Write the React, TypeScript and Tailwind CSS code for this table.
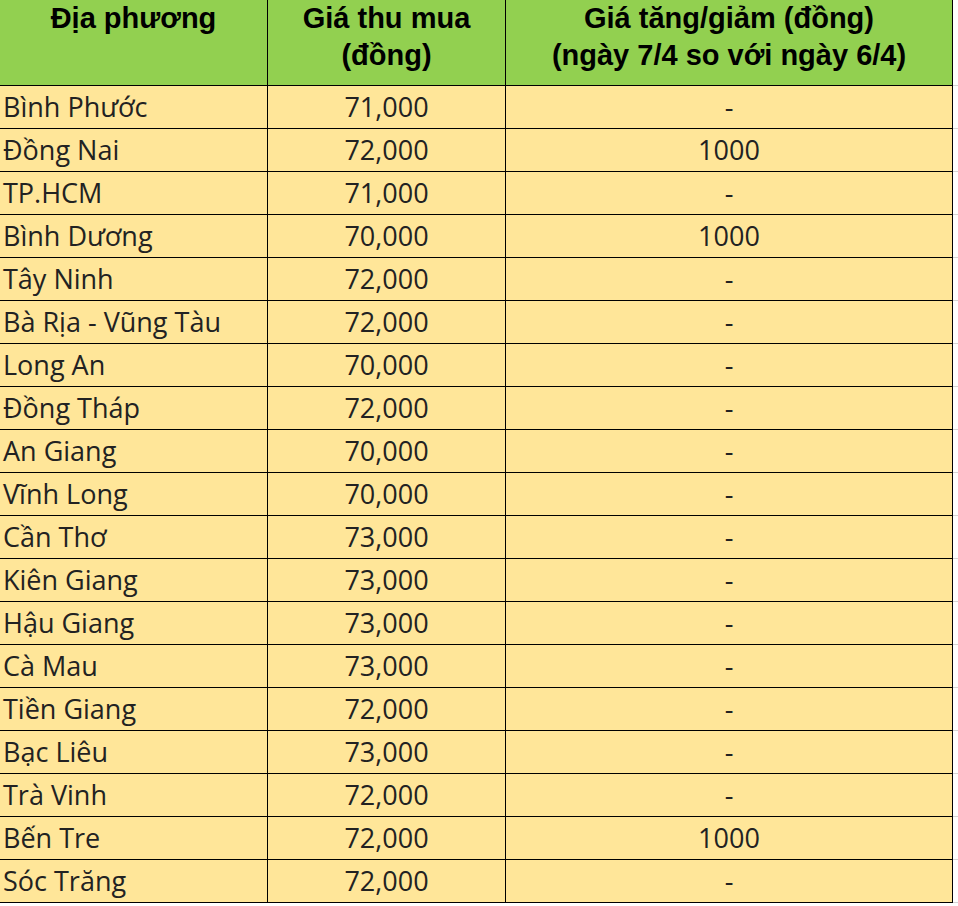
const rows: [string, string, string][] = [
  ["Bình Phước", "71,000", "-"],
  ["Đồng Nai", "72,000", "1000"],
  ["TP.HCM", "71,000", "-"],
  ["Bình Dương", "70,000", "1000"],
  ["Tây Ninh", "72,000", "-"],
  ["Bà Rịa - Vũng Tàu", "72,000", "-"],
  ["Long An", "70,000", "-"],
  ["Đồng Tháp", "72,000", "-"],
  ["An Giang", "70,000", "-"],
  ["Vĩnh Long", "70,000", "-"],
  ["Cần Thơ", "73,000", "-"],
  ["Kiên Giang", "73,000", "-"],
  ["Hậu Giang", "73,000", "-"],
  ["Cà Mau", "73,000", "-"],
  ["Tiền Giang", "72,000", "-"],
  ["Bạc Liêu", "73,000", "-"],
  ["Trà Vinh", "72,000", "-"],
  ["Bến Tre", "72,000", "1000"],
  ["Sóc Trăng", "72,000", "-"],
];

export default function App() {
  return (
    <div className="flex bg-white w-[958px] h-[906px]">
      {/* price table */}
      <div className="w-[953px] flex flex-col">
        <div className="flex h-[86px] bg-[#92d050] border-b border-black font-['Liberation_Sans',Arial,sans-serif] font-bold text-[29px] leading-[37px] text-black text-center">
          <div className="w-[268px] border-r border-black">Địa phương</div>
          <div className="w-[238px] border-r border-black">
            Giá thu mua
            <br />
            (đồng)
          </div>
          <div className="w-[447px] border-r border-black">
            Giá tăng/giảm (đồng)
            <br />
            (ngày 7/4 so với ngày 6/4)
          </div>
        </div>
        {rows.map(([place, price, diff]) => (
          <div
            key={place}
            className="flex h-[43px] bg-[#ffe699] border-b border-black font-['Open_Sans',sans-serif] text-[27px] text-[#222]"
          >
            <div className="w-[268px] border-r border-black flex items-center pl-[3px]">{place}</div>
            <div className="w-[238px] border-r border-black flex items-center justify-center">{price}</div>
            <div className="w-[447px] border-r border-black flex items-center justify-center">{diff}</div>
          </div>
        ))}
      </div>
      {/* sheet grid beyond the table */}
      <div className="flex-1 flex flex-col">
        <div className="h-[86px] border-b border-[#d4d4d4]" />
        {rows.map(([place]) => (
          <div key={place} className="h-[43px] border-b border-[#d4d4d4]" />
        ))}
      </div>
    </div>
  );
}
